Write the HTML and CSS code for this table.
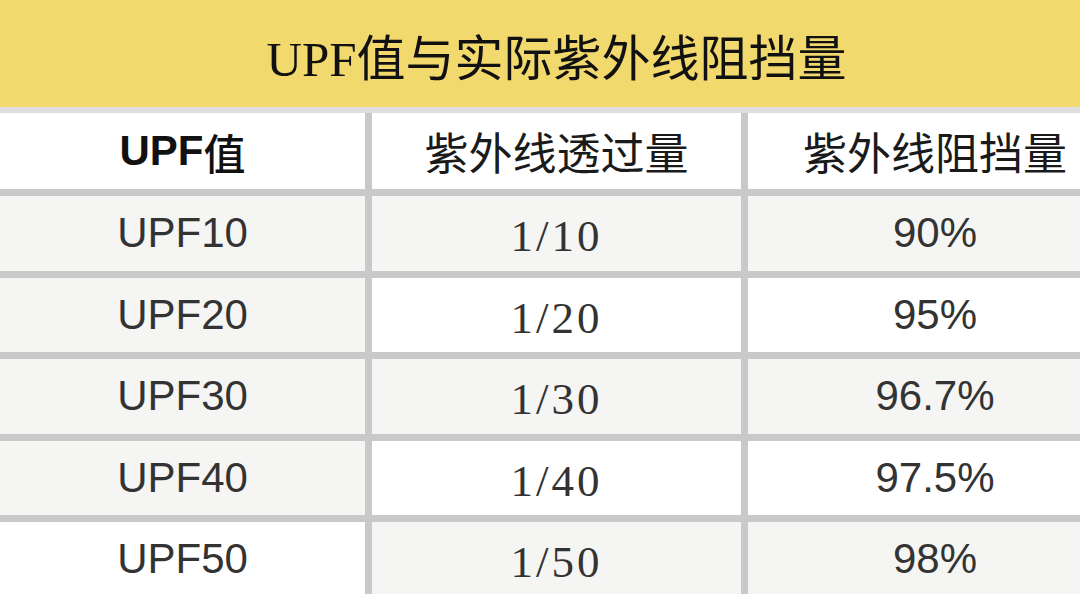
FILE: index.html
```html
<!DOCTYPE html>
<html lang="zh-CN">
<head>
<meta charset="utf-8">
<title>UPF值与实际紫外线阻挡量</title>
<link rel="stylesheet" href="styles.css">
</head>
<body>
<div class="page">
  <div class="title">UPF值与实际紫外线阻挡量</div>
  <div class="table">
    <div class="cell head head-bold">UPF<span class="cjk">值</span></div>
    <div class="cell head">紫外线透过量</div>
    <div class="cell head">紫外线阻挡量</div>

    <div class="cell sans shade">UPF10</div>
    <div class="cell serif shade">1/10</div>
    <div class="cell sans shade">90%</div>

    <div class="cell sans shade">UPF20</div>
    <div class="cell serif">1/20</div>
    <div class="cell sans">95%</div>

    <div class="cell sans shade">UPF30</div>
    <div class="cell serif shade">1/30</div>
    <div class="cell sans shade">96.7%</div>

    <div class="cell sans shade">UPF40</div>
    <div class="cell serif">1/40</div>
    <div class="cell sans">97.5%</div>

    <div class="cell sans">UPF50</div>
    <div class="cell serif shade">1/50</div>
    <div class="cell sans shade">98%</div>
  </div>
</div>
</body>
</html>
```

FILE: styles.css
```css
html, body {
  margin: 0;
  padding: 0;
  background: #ffffff;
  overflow: hidden;
}

.page {
  width: 1122px;
  height: 594px;
  overflow: hidden;
}

.title {
  height: 113px;
  box-sizing: border-box;
  background: #f2d96e;
  border-bottom: 6px solid #dedede;
  display: flex;
  align-items: center;
  justify-content: center;
  padding-top: 2px;
  padding-right: 9px;
  font-family: "Liberation Serif", "Noto Sans CJK SC", serif;
  font-size: 49px;
  font-weight: normal;
  color: #111111;
}

.table {
  display: grid;
  grid-template-columns: 365px 369px 374px;
  grid-template-rows: 76px repeat(5, 74.5px);
  column-gap: 7px;
  row-gap: 7px;
  background: #c9c9c9;
}

.cell {
  background: #ffffff;
  display: flex;
  align-items: center;
  justify-content: center;
  color: #333333;
}

.cell.shade {
  background: #f5f5f3;
}

.head {
  font-family: "Noto Sans CJK SC", sans-serif;
  font-size: 44px;
  color: #1a1a1a;
}

.head-bold {
  font-family: "Liberation Sans", "Noto Sans CJK SC", sans-serif;
  font-weight: bold;
  font-size: 42px;
  color: #111111;
}

.head-bold .cjk {
  font-family: "Noto Sans CJK SC", sans-serif;
  font-weight: 500;
}

.sans {
  font-family: "Liberation Sans", Arial, sans-serif;
  font-size: 42px;
}

.serif {
  font-family: "Liberation Serif", serif;
  font-size: 45px;
  letter-spacing: 3px;
  padding-top: 6px;
}
```
